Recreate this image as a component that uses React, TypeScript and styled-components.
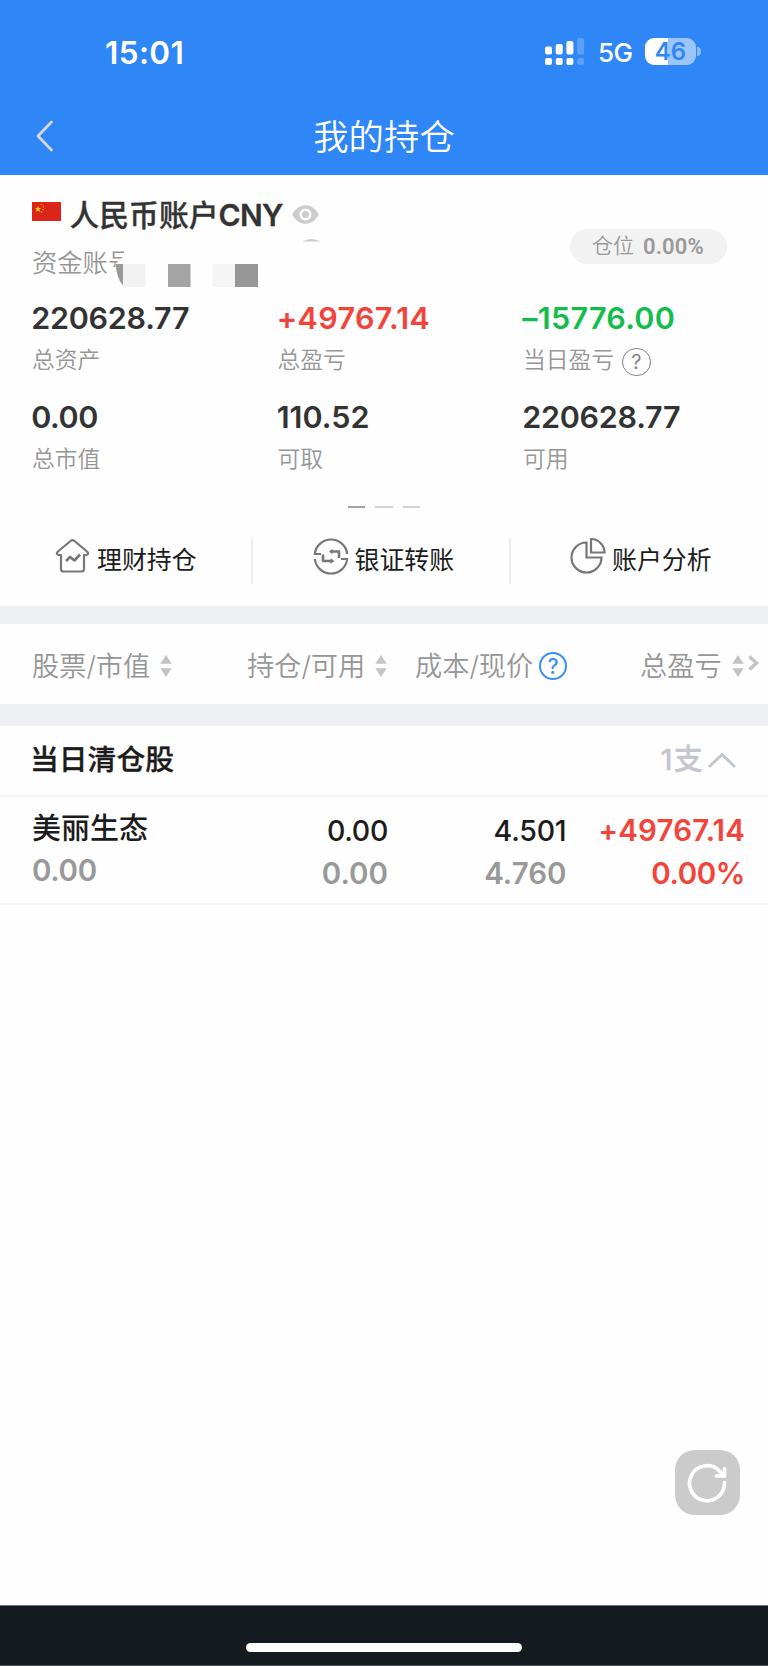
import React from "react";
import styled, { createGlobalStyle } from "styled-components";

const GlobalStyle = createGlobalStyle`
  * { box-sizing: border-box; }
  body { margin: 0; background: #fefefe; }
`;

const Screen = styled.div`
  width: 768px;
  height: 1666px;
  display: flex;
  flex-direction: column;
  background: #fefefe;
  font-family: Inter, "Noto Sans CJK SC", sans-serif;
  color: #333;
  white-space: nowrap;
  overflow: hidden;
`;

const Header = styled.header`
  height: 175px;
  flex: none;
  background: #2f86f6;
  color: #fff;
`;

const StatusBar = styled.div`
  height: 100px;
  padding: 5px 67px 0 105px;
  display: flex;
  align-items: center;
`;

const Clock = styled.span`
  font-size: 31.5px;
  font-weight: 600;
  line-height: 40px;
  letter-spacing: 0.4px;
  margin-right: auto;
`;

const SignalIcon = styled.svg`
  width: 40px;
  height: 28px;
  margin: -1px 13px 0 0;
`;

const Network = styled.span`
  font-size: 26px;
  font-weight: 500;
  line-height: 30px;
  width: 47px;
  letter-spacing: -0.6px;
  padding-top: 1px;
`;

const Battery = styled.div`
  position: relative;
  width: 51px;
  height: 27px;
  margin: -2px 5px 0 0;
  border-radius: 9px;
  background: linear-gradient(90deg, #fff 46%, #9cc5fb 46%);
  color: #2f86f6;
  font-size: 24px;
  font-weight: 600;
  line-height: 27px;
  text-align: center;
  &::after {
    content: "";
    position: absolute;
    right: -5px;
    top: 9px;
    width: 4px;
    height: 9px;
    border-radius: 0 4px 4px 0;
    background: #8dbcfa;
  }
`;

const TitleBar = styled.div`
  display: grid;
  grid-template-columns: 100px 1fr 100px;
  align-items: center;
  height: 72px;
`;

const BackIcon = styled.svg`
  width: 20px;
  height: 34px;
  margin-left: 34.5px;
`;

const Title = styled.h1`
  margin: 0;
  padding-top: 3px;
  font-size: 35.4px;
  font-weight: 350;
  line-height: 50px;
  text-align: center;
`;

const Account = styled.section`
  height: 431px;
  flex: none;
  padding: 20px 0 0 32px;
`;

const AccountTop = styled.div`
  display: flex;
  justify-content: space-between;
  height: 104px;
  padding-right: 41px;
`;

const AccountName = styled.div`
  display: flex;
  align-items: center;
  height: 40px;
  font-size: 29.8px;
  font-weight: 600;
  line-height: 40px;
`;

const Flag = styled.svg`
  width: 29px;
  height: 19px;
  margin: -7px 8.5px 0 0;
`;

const NameText = styled.span`
  font-weight: 500;
  margin-top: -1px;
  -webkit-text-stroke: 0.3px #333;
  b { font-weight: 600; font-size: 30px; letter-spacing: -0.7px; }
`;

const EyeIcon = styled.svg`
  width: 29px;
  height: 21px;
  margin: -2px 0 0 8px;
`;

const AccountNumber = styled.div`
  display: flex;
  position: relative;
  height: 56px;
`;

const NumberLabel = styled.span`
  font-size: 25.3px;
  font-weight: 350;
  line-height: 56px;
  color: #969696;
`;

const Mask = styled.svg`
  position: absolute;
  left: 78px;
  top: 0;
  width: 220px;
  height: 56px;
`;

const Position = styled.div`
  display: flex;
  align-items: center;
  gap: 9px;
  width: 157px;
  height: 35px;
  margin-top: 34px;
  padding-left: 22px;
  border-radius: 18px;
  background: #f2f2f2;
  color: #999;
  font-size: 21px;
  font-weight: 350;
  line-height: 32px;
  span { margin-top: -1px; }
  b { font: 600 22px Roboto, sans-serif; letter-spacing: 0.15px; }
`;

const Metrics = styled.div`
  display: grid;
  grid-template-columns: 245.5px 245.5px 1fr;
  grid-auto-rows: 99px;
  margin-left: -0.8px;
`;

const Value = styled.div<{ $tone?: string; $track?: number }>`
  font-size: 30.5px;
  font-weight: 600;
  line-height: 38px;
  letter-spacing: ${(p) => p.$track ?? 0}px;
  color: ${(p) => p.$tone ?? "#333"};
`;

const Label = styled.div`
  display: flex;
  align-items: center;
  gap: 8px;
  height: 46px;
  padding-left: 0.8px;
  font-size: 22.8px;
  font-weight: 350;
  line-height: 46px;
  color: #969696;
`;

const HelpMark = styled.span<{ $color: string; $size: number; $weight: number; $drop?: number; $stroke?: number }>`
  display: inline-flex;
  align-items: center;
  justify-content: center;
  width: 28.5px;
  height: 28.5px;
  flex: none;
  margin-top: ${(p) => p.$drop ?? 0}px;
  border: ${(p) => p.$stroke ?? 2}px solid ${(p) => p.$color};
  border-radius: 50%;
  color: ${(p) => p.$color};
  font-size: ${(p) => p.$size}px;
  font-weight: ${(p) => p.$weight};
  line-height: 1;
`;

const Pager = styled.div`
  display: flex;
  justify-content: center;
  gap: 10px;
  margin: 9px 0 0 -32px;
`;

const PagerDash = styled.i<{ $active?: boolean }>`
  width: 17.5px;
  height: 2px;
  background: ${(p) => (p.$active ? "#a3a3a3" : "#d2d2d2")};
`;

const Actions = styled.div`
  display: flex;
  margin: 30px 0 0 -32px;
  height: 46px;
`;

const Action = styled.div`
  display: flex;
  align-items: center;
  width: 257.5px;
  padding-left: 59.5px;
  font-size: 24.9px;
  font-weight: 400;
  line-height: 44px;
  color: #1c1c1c;
  &:not(:last-child) { border-right: 2px solid #ececec; }
  &:first-child { width: 253px; padding-left: 55px; }
  span { margin-top: -2px; }
`;

const ActionIcon = styled.svg`
  width: 36px;
  height: 38px;
  margin: -10px 6px 0 0;
  fill: none;
  stroke: #777;
  stroke-width: 2.2;
  stroke-linejoin: round;
`;

const Gap = styled.div<{ $h: number }>`
  height: ${(p) => p.$h}px;
  flex: none;
  background: #eff0f4;
`;

const ColumnHeads = styled.div`
  display: grid;
  grid-template-columns: 215px 168px 225px 1fr;
  align-items: center;
  height: 80px;
  flex: none;
  padding: 6px 0 0 32px;
  font-size: 27.2px;
  font-weight: 350;
  line-height: 40px;
  color: #969696;
`;

const ColumnHead = styled.div<{ $gap?: number }>`
  display: flex;
  align-items: center;
  gap: ${(p) => p.$gap ?? 10}px;
`;

const SortIcon = styled.svg`
  width: 12px;
  height: 22px;
  fill: #c4c4c4;
  margin-top: -3px;
`;

const MoreIcon = styled.svg`
  width: 11px;
  height: 16px;
  margin: -9px 0 0 -6px;
`;

const GroupHead = styled.div`
  display: flex;
  align-items: center;
  justify-content: space-between;
  height: 71px;
  flex: none;
  padding: 0 32px 2px 30px;
  border-bottom: 2px solid #f3f3f5;
  font-size: 28.8px;
  font-weight: 500;
  line-height: 66px;
  color: #1c1c1c;
  -webkit-text-stroke: 0.3px currentColor;
`;

const GroupCount = styled.span`
  display: flex;
  align-items: center;
  gap: 4px;
  color: #c3c6cf;
  font-size: 29px;
  letter-spacing: 1.2px;
`;

const CountIcon = styled.svg`
  width: 28px;
  height: 16px;
`;

const Holding = styled.div`
  display: grid;
  grid-template-columns: 180px 176px 178.5px 1fr;
  height: 108px;
  flex: none;
  padding: 12px 23px 0 32px;
  border-bottom: 2px solid #f6f6f7;
  font-size: 29.5px;
  font-weight: 500;
`;

const HoldingName = styled.div`
  font-size: 29px;
  line-height: 40px;
  color: #1c1c1c;
`;

const Cell = styled.div<{ $tone?: string; $weight?: number; $size?: number; $track?: number }>`
  text-align: right;
  height: 43px;
  line-height: 43px;
  color: ${(p) => p.$tone ?? "#1c1c1c"};
  font-size: ${(p) => p.$size ?? 29.5}px;
  font-weight: ${(p) => p.$weight ?? 500};
  letter-spacing: ${(p) => p.$track ?? 0}px;
`;

const HoldingValue = styled.div`
  line-height: 43px;
  color: #999;
  font-weight: 580;
  letter-spacing: -0.3px;
`;

const Body = styled.main`
  flex: 1;
  display: flex;
  align-items: flex-end;
  justify-content: flex-end;
  padding: 0 28px 90px 0;
`;

const RefreshButton = styled.button`
  width: 65px;
  height: 65px;
  padding: 0;
  border: 0;
  border-radius: 20px;
  background: #cbcbcb;
`;

const BottomBar = styled.footer`
  height: 61px;
  flex: none;
  display: flex;
  justify-content: center;
  padding-top: 37px;
  background: #151920;
  border-top: 1px solid #70737a;
  border-bottom: 1px solid #50535a;
`;

const HomeIndicator = styled.div`
  width: 276px;
  height: 9px;
  border-radius: 5px;
  background: #fff;
`;

const RED = "#f3443a";
const GREEN = "#12bd4c";
const GREY = "#999";

const metrics = [
  { value: "220628.77", label: "总资产", track: -0.25 },
  { value: "+49767.14", label: "总盈亏", tone: RED, track: 0.35 },
  { value: "–15776.00", label: "当日盈亏", tone: GREEN, track: 0.3, help: true },
  { value: "0.00", label: "总市值", track: -0.4 },
  { value: "110.52", label: "可取" },
  { value: "220628.77", label: "可用", track: -0.25 },
];

const Sort = () => (
  <SortIcon viewBox="0 0 12 22">
    <path d="M6 0L11.7 8.7H.3zM6 22L.3 13.3h11.4z" />
  </SortIcon>
);

export default function App() {
  return (
    <Screen>
      <GlobalStyle />
      <Header>
        <StatusBar>
          <Clock>15:01</Clock>
          <SignalIcon viewBox="0 0 40 28" fill="#fff">
            <rect x="0" y="8.5" width="7" height="8" rx="2" />
            <rect x="10.7" y="6" width="7" height="10.5" rx="2" />
            <rect x="21.4" y="3" width="7" height="13.5" rx="2" />
            <rect x="32.1" y="0" width="7" height="16.5" rx="2" opacity=".22" />
            <rect x="0" y="20" width="7" height="7" rx="2" />
            <rect x="10.7" y="20" width="7" height="7" rx="2" />
            <rect x="21.4" y="20" width="7" height="7" rx="2" />
            <rect x="32.1" y="20" width="7" height="7" rx="2" opacity=".22" />
          </SignalIcon>
          <Network>5G</Network>
          <Battery>46</Battery>
        </StatusBar>
        <TitleBar>
          <BackIcon viewBox="0 0 20 34" fill="none" stroke="#d6d7dc" strokeWidth="2.8" strokeLinecap="round" strokeLinejoin="round">
            <path d="M16.5 3L3 17l13.5 14" />
          </BackIcon>
          <Title>我的持仓</Title>
        </TitleBar>
      </Header>

      <Account>
        <AccountTop>
          <div>
            <AccountName>
              <Flag viewBox="0 0 29 19">
                <rect width="29" height="19" fill="#dc2519" />
                <path d="M6 4l.8 2.1 2.2.1-1.7 1.4.6 2.2L6 8.5 4.1 9.8l.6-2.2L3 6.2l2.2-.1z" fill="#fbd30c" />
                <g fill="#eea51b">
                  <circle cx="9.5" cy="2.5" r=".8" />
                  <circle cx="11.3" cy="4.6" r=".8" />
                  <circle cx="11.3" cy="7.5" r=".8" />
                  <circle cx="9.5" cy="9.9" r=".8" />
                </g>
              </Flag>
              <NameText>人民币账户<b>CNY</b></NameText>
              <EyeIcon viewBox="0 0 30 22">
                <path d="M1 11C8-2 22-2 29 11 22 24 8 24 1 11z" fill="#ccc" />
                <circle cx="15" cy="11" r="5" fill="#ccc" stroke="#fff" strokeWidth="2.6" />
              </EyeIcon>
            </AccountName>
            <AccountNumber>
              <NumberLabel>资金账号</NumberLabel>
              <Mask viewBox="0 0 220 56">
                <path d="M14 0h60v56H14L8 44 5 29l9-8z" fill="#fefefe" />
                <path d="M5.5 29H13v21.5Q7 44 5.5 29z" fill="#999" />
                <rect x="13" y="29" width="22.5" height="23" fill="#f2f2f2" />
                <rect x="58" y="29" width="22.5" height="23" fill="#a4a4a4" />
                <rect x="102.5" y="29" width="22.5" height="23" fill="#f5f5f5" />
                <rect x="125" y="29" width="23" height="23" fill="#979797" />
                <path d="M192 6.5Q201 1.5 211 6.5z" fill="#ccc" />
              </Mask>
            </AccountNumber>
          </div>
          <Position><span>仓位</span><b>0.00%</b></Position>
        </AccountTop>
        <Metrics>
          {metrics.map((m, i) => (
            <div key={i}>
              <Value $tone={m.tone} $track={m.track}>{m.value}</Value>
              <Label>
                {m.label}
                {m.help && <HelpMark $color="#85858a" $size={20} $weight={400} $drop={4} $stroke={1.8}>?</HelpMark>}
              </Label>
            </div>
          ))}
        </Metrics>
        <Pager>
          <PagerDash $active />
          <PagerDash />
          <PagerDash />
        </Pager>
        <Actions>
          <Action>
            <ActionIcon viewBox="0 0 36 38">
              <path d="M6 18H3.500Q.5 17 3 14.500L15.500 4q2-1.600 4 0L32 14.500Q34.500 17 31.500 18H29v14q0 2.500-2.500 2.500h-18Q6 34.500 6 32z" />
              <path d="M11 24l4-4 4.500 3.500L25 17.500" strokeWidth="2.6" />
            </ActionIcon>
            <span>理财持仓</span>
          </Action>
          <Action>
            <ActionIcon viewBox="0 0 36 38">
              <path d="M8 17H1.8A16.3 16.3 0 0 1 34.2 17M28 22h6.2A16.3 16.3 0 0 1 1.8 22" />
              <path d="M18.500 14.500H26V21M19 24H10v-6.500" strokeWidth="2.6" />
              <path d="M19.500 11.800v5.400l-3.500-2.700zM17.500 21.300v5.400l4-2.700z" fill="#777" stroke="none" />
            </ActionIcon>
            <span>银证转账</span>
          </Action>
          <Action>
            <ActionIcon viewBox="0 0 36 38">
              <path d="M16.5 5.5A15 15 0 1 0 31.5 20.5H16.5z" strokeLinejoin="miter" />
              <path d="M21 2v13.5h13.5A13.5 13.5 0 0 0 21 2z" strokeLinejoin="miter" />
            </ActionIcon>
            <span>账户分析</span>
          </Action>
        </Actions>
      </Account>

      <Gap $h={18} />
      <ColumnHeads>
        <ColumnHead>股票/市值<Sort /></ColumnHead>
        <ColumnHead>持仓/可用<Sort /></ColumnHead>
        <ColumnHead $gap={5.5}>
          成本/现价
          <HelpMark $color="#3a8ff7" $size={21} $weight={500} $drop={-2}>?</HelpMark>
        </ColumnHead>
        <ColumnHead>
          总盈亏
          <Sort />
          <MoreIcon viewBox="0 0 11 16" fill="none" stroke="#c4c4c4" strokeWidth="3.4">
            <path d="M1.5 1.5L8.5 8l-7 6.5" />
          </MoreIcon>
        </ColumnHead>
      </ColumnHeads>
      <Gap $h={22} />

      <GroupHead>
        当日清仓股
        <GroupCount>
          1支
          <CountIcon viewBox="0 0 28 16" fill="none" stroke="#c3c6cf" strokeWidth="3" strokeLinecap="round" strokeLinejoin="round">
            <path d="M2 14L14 2.5 26 14" />
          </CountIcon>
        </GroupCount>
      </GroupHead>
      <Holding>
        <div>
          <HoldingName>美丽生态</HoldingName>
          <HoldingValue>0.00</HoldingValue>
        </div>
        <div>
          <Cell $size={28.5} $track={-0.3}>0.00</Cell>
          <Cell $tone={GREY} $weight={580}>0.00</Cell>
        </div>
        <div>
          <Cell $size={28.5} $track={-0.2}>4.501</Cell>
          <Cell $tone={GREY} $weight={580}>4.760</Cell>
        </div>
        <div>
          <Cell $tone={RED} $weight={600} $track={0.15}>+49767.14</Cell>
          <Cell $tone={RED} $weight={600} $track={-0.4}>0.00%</Cell>
        </div>
      </Holding>

      <Body>
        <RefreshButton aria-label="刷新">
          <svg width="65" height="65" viewBox="0 0 65 65" fill="none" stroke="#fff" strokeWidth="3.7" strokeLinecap="round" strokeLinejoin="round">
            <path d="M49.5 32.500A17.5 17.5 0 1 1 44 20.500L49 26" />
            <path d="M49.5 18.500v7.500h-8" />
          </svg>
        </RefreshButton>
      </Body>
      <BottomBar>
        <HomeIndicator />
      </BottomBar>
    </Screen>
  );
}
